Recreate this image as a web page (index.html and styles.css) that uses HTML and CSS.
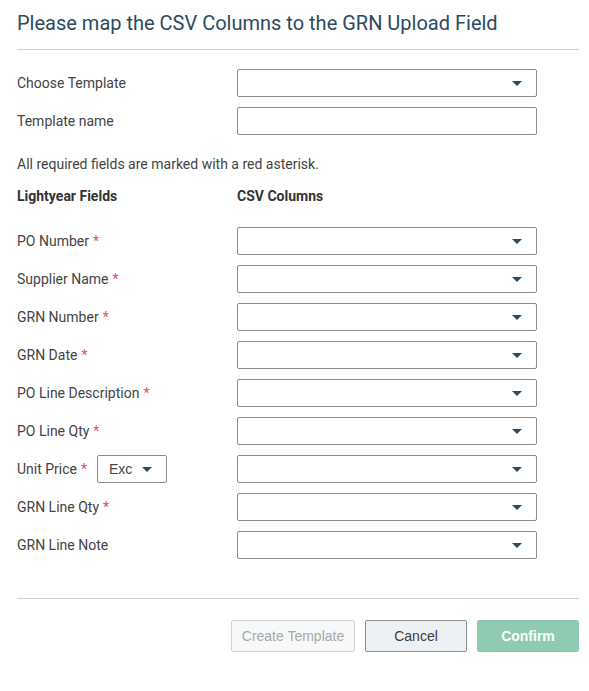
FILE: index.html
```html
<!DOCTYPE html>
<html lang="en">
<head>
  <meta charset="UTF-8">
  <title>Map CSV Columns</title>
  <link rel="stylesheet" href="styles.css">
</head>
<body>
  <div class="dialog">
    <h1 class="dialog-title">Please map the CSV Columns to the GRN Upload Field</h1>

    <div class="form">
      <div class="row">
        <label class="row-label">Choose Template</label>
        <div class="select"><span class="caret"></span></div>
      </div>
      <div class="row">
        <label class="row-label">Template name</label>
        <div class="input"></div>
      </div>

      <p class="note">All required fields are marked with a red asterisk.</p>

      <div class="row heads">
        <div class="row-label">Lightyear Fields</div>
        <div>CSV Columns</div>
      </div>

      <div class="mapping">
        <div class="row">
          <label class="row-label">PO Number <span class="req">*</span></label>
          <div class="select"><span class="caret"></span></div>
        </div>
        <div class="row">
          <label class="row-label">Supplier Name <span class="req">*</span></label>
          <div class="select"><span class="caret"></span></div>
        </div>
        <div class="row">
          <label class="row-label">GRN Number <span class="req">*</span></label>
          <div class="select"><span class="caret"></span></div>
        </div>
        <div class="row">
          <label class="row-label">GRN Date <span class="req">*</span></label>
          <div class="select"><span class="caret"></span></div>
        </div>
        <div class="row">
          <label class="row-label">PO Line Description <span class="req">*</span></label>
          <div class="select"><span class="caret"></span></div>
        </div>
        <div class="row">
          <label class="row-label">PO Line Qty <span class="req">*</span></label>
          <div class="select"><span class="caret"></span></div>
        </div>
        <div class="row">
          <label class="row-label">Unit Price <span class="req">*</span>
            <span class="mini-select">Exc <span class="caret"></span></span>
          </label>
          <div class="select"><span class="caret"></span></div>
        </div>
        <div class="row">
          <label class="row-label">GRN Line Qty <span class="req">*</span></label>
          <div class="select"><span class="caret"></span></div>
        </div>
        <div class="row">
          <label class="row-label">GRN Line Note</label>
          <div class="select"><span class="caret"></span></div>
        </div>
      </div>
    </div>

    <div class="footer">
      <button class="btn btn-disabled">Create Template</button>
      <button class="btn btn-cancel">Cancel</button>
      <button class="btn btn-confirm">Confirm</button>
    </div>
  </div>
</body>
</html>
```

FILE: styles.css
```css
body {
  font-family: Roboto, 'Noto Sans', sans-serif;
  background-color: #fff;
  color: #444;
  margin: 0;
}

.dialog {
  padding: 0 10px 0 17px;
}

.dialog-title {
  margin: 0;
  padding: 11px 0 14px;
  font-size: 20px;
  font-weight: 400;
  color: #2d4a62;
  border-bottom: 1px solid #ccd2d6;
}

.form {
  padding: 19px 0 29px;
  border-bottom: 1px solid #ccd2d6;
  font-size: 14px;
}

.row {
  display: flex;
  align-items: center;
  height: 28px;
  margin-bottom: 10px;
}

.row-label {
  width: 220px;
  flex-shrink: 0;
  display: flex;
  align-items: center;
}

.req {
  color: #e8505b;
  margin-left: 4px;
}

.select,
.input {
  box-sizing: border-box;
  width: 300px;
  height: 28px;
  border: 1px solid #8c8c8c;
  border-radius: 2px;
  position: relative;
}

.caret {
  position: absolute;
  right: 14px;
  top: 11px;
  width: 0;
  height: 0;
  border-left: 5px solid transparent;
  border-right: 5px solid transparent;
  border-top: 5px solid #2d4a62;
}

.note {
  margin: 20px 0 0;
  height: 32px;
  line-height: 18px;
}

.heads {
  font-weight: bold;
  color: #333;
  height: 18px;
  margin-bottom: 22px;
}

.mini-select {
  box-sizing: border-box;
  position: relative;
  width: 70px;
  height: 28px;
  margin-left: 10px;
  border: 1px solid #8c8c8c;
  border-radius: 2px;
  padding-left: 11px;
  display: flex;
  align-items: center;
  color: #444;
  font-family: 'Liberation Sans', Arial, sans-serif;
}

.footer {
  display: flex;
  justify-content: flex-end;
  gap: 10px;
  padding-top: 21px;
}

.btn {
  box-sizing: border-box;
  height: 32px;
  border-radius: 2px;
  font-family: 'Liberation Sans', Arial, sans-serif;
  font-size: 14px;
  padding: 0;
}

.btn-disabled {
  width: 124px;
  background-color: #f7f8f9;
  border: 1px solid #cfd3d6;
  color: #a8a8a8;
}

.btn-cancel {
  width: 102px;
  background-color: #eef1f4;
  border: 1px solid #8a8f95;
  color: #3b3b3b;
}

.btn-confirm {
  width: 102px;
  background-color: #8ecbb2;
  border: 1px solid #8ecbb2;
  color: #fff;
  font-weight: bold;
}
```
